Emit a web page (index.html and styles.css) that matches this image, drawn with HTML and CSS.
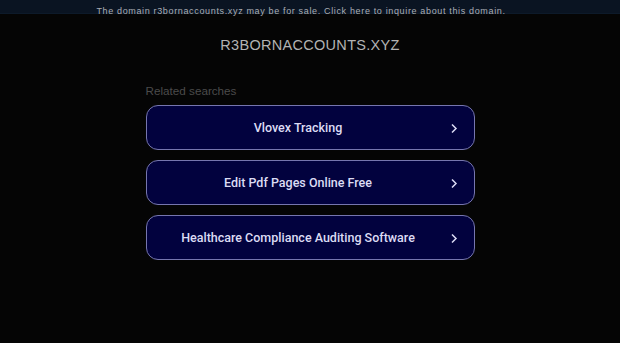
FILE: index.html
```html
<!DOCTYPE html>
<html>
  <head>
    <title>r3bornaccounts.xyz</title>
    <meta charset="UTF-8" />
    <link rel="stylesheet" href="styles.css">
  </head>
  <body>
    <div class="topbar">
      <a href="#" class="sale">The domain r3bornaccounts.xyz may be for sale. Click here to inquire about this domain.</a>
    </div>
    <div class="container">
      <div class="header">R3BORNACCOUNTS.XYZ</div>
      <div class="related">
        <div class="description">Related searches</div>
        <a href="#" class="search">
          <span>Vlovex Tracking</span>
          <svg class="chevron" width="8" height="11" viewBox="0 0 8 11"><path d="M2 1.5 L6 5.5 L2 9.5" fill="none" stroke="#dcdcf4" stroke-width="1.5"/></svg>
        </a>
        <a href="#" class="search">
          <span>Edit Pdf Pages Online Free</span>
          <svg class="chevron" width="8" height="11" viewBox="0 0 8 11"><path d="M2 1.5 L6 5.5 L2 9.5" fill="none" stroke="#dcdcf4" stroke-width="1.5"/></svg>
        </a>
        <a href="#" class="search">
          <span>Healthcare Compliance Auditing Software</span>
          <svg class="chevron" width="8" height="11" viewBox="0 0 8 11"><path d="M2 1.5 L6 5.5 L2 9.5" fill="none" stroke="#dcdcf4" stroke-width="1.5"/></svg>
        </a>
      </div>
    </div>
  </body>
</html>
```

FILE: styles.css
```css
body,
html {
  margin: 0;
  padding: 0;
  height: 100%;
  font-family: "Liberation Sans", Arial, sans-serif;
  background-color: #050505;
}

.topbar {
  height: 13px;
  padding-right: 18px;
  background-color: #0a1422;
  border-bottom: 1px solid #0d1a2a;
  text-align: center;
}

.sale {
  font-size: 9px;
  line-height: 12px;
  letter-spacing: 0.65px;
  color: #a9adb2;
  text-decoration: none;
}

.container {
  display: flex;
  flex-direction: column;
  align-items: center;
}

.header {
  margin-top: 23px;
  font-size: 14.5px;
  line-height: 16px;
  letter-spacing: 0.3px;
  color: #b3b3b3;
}

.related {
  width: 329px;
  margin-top: 31px;
  display: flex;
  flex-direction: column;
  gap: 10px;
}

.description {
  font-size: 11.7px;
  line-height: 14px;
  color: #4b4b4b;
  margin-bottom: -3px;
}

.search {
  box-sizing: border-box;
  height: 45px;
  padding-right: 24px;
  display: flex;
  align-items: center;
  justify-content: center;
  position: relative;
  background-color: #02023e;
  border: 1px solid #7676ae;
  border-radius: 12px;
  color: #dcdcf4;
  font-family: Roboto, "Liberation Sans", sans-serif;
  font-size: 12.5px;
  font-weight: 500;
  letter-spacing: 0;
  text-decoration: none;
}

.chevron {
  position: absolute;
  right: 16px;
  top: 17px;
}
```
